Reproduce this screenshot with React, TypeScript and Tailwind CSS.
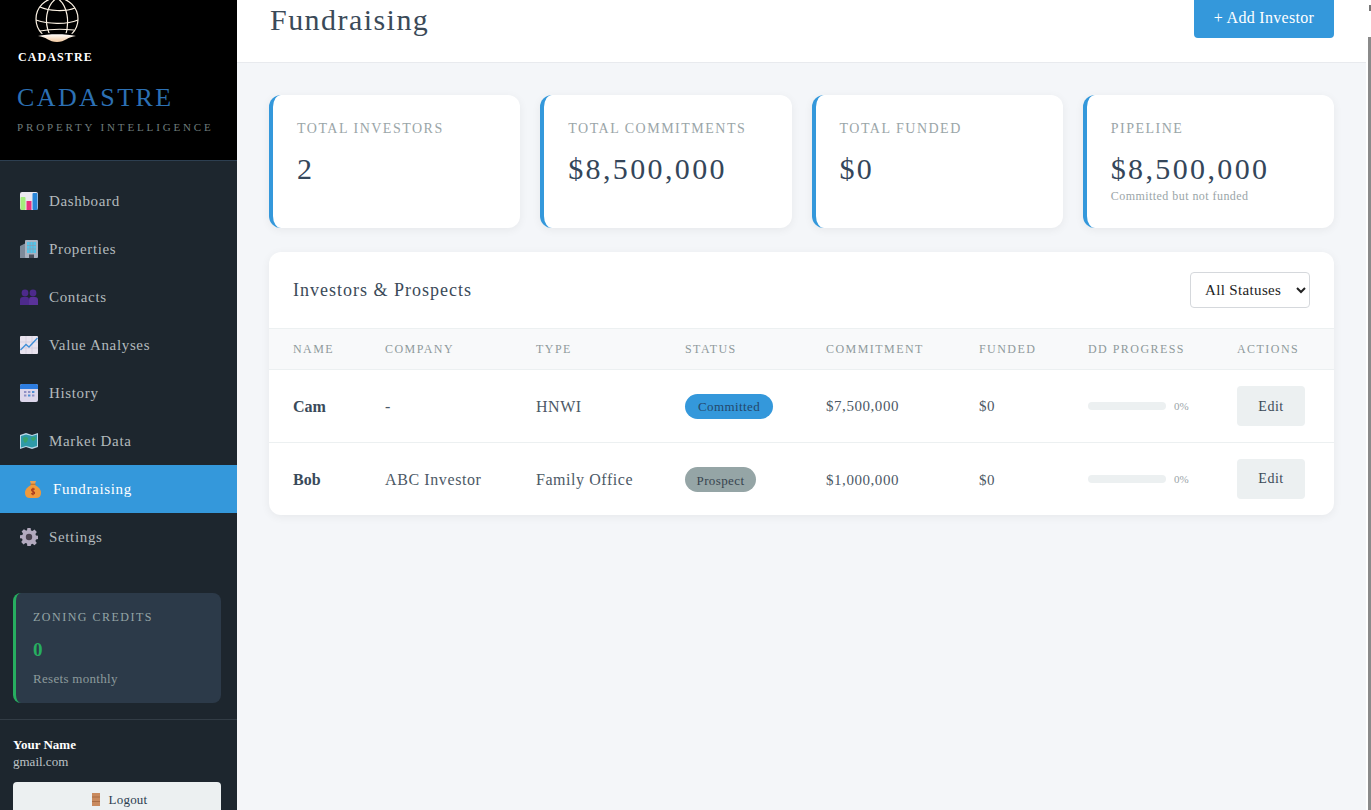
import React from "react";

const IconChart = () => (
  <svg width="18" height="18" viewBox="0 0 18 18">
    <rect x="0" y="0" width="18" height="18" rx="2" fill="#ece8f0" />
    <rect x="0.5" y="5" width="5" height="13" rx="1" fill="#a4ec7c" />
    <rect x="6.5" y="9" width="5" height="9" fill="#e8337e" />
    <rect x="12.5" y="1" width="5" height="17" rx="1" fill="#2a86d8" />
  </svg>
);
const IconBuilding = () => (
  <svg width="18" height="18" viewBox="0 0 18 18">
    <path d="M0 6 L6 3 V18 H0 Z" fill="#7d8a9a" />
    <rect x="5" y="0" width="13" height="18" rx="1" fill="#a9b2c0" />
    <rect x="7" y="2" width="9" height="11" fill="#55c4e8" />
    <path d="M7 5.5H16M7 9H16M10 2V13M13 2V13" stroke="#8c9bb0" strokeWidth="0.7" />
    <rect x="9" y="14.5" width="5" height="3.5" fill="#4a4f5c" />
  </svg>
);
const IconPeople = () => (
  <svg width="18" height="16" viewBox="0 0 18 16">
    <circle cx="5" cy="4" r="3.4" fill="#4d2a8c" />
    <circle cx="13" cy="4" r="3.4" fill="#4d2a8c" />
    <path d="M0 16 V11 Q0 8 3 8 H7 Q9 8 9 11 V16 Z" fill="#4d2a8c" />
    <path d="M9 16 V11 Q9 8 11 8 H15 Q18 8 18 11 V16 Z" fill="#5a3299" />
  </svg>
);
const IconTrend = () => (
  <svg width="18" height="18" viewBox="0 0 18 18">
    <rect width="18" height="18" rx="1" fill="#e9e3ee" />
    <path d="M0 6H18M0 12H18M6 0V18M12 0V18" stroke="#cfc6d8" strokeWidth="0.6" />
    <path d="M0.5 14 L6 8.5 L9 11 L17.5 2" fill="none" stroke="#3f8fd8" strokeWidth="1.3" />
  </svg>
);
const IconCalendar = () => (
  <svg width="18" height="18" viewBox="0 0 18 18">
    <rect width="18" height="18" rx="2" fill="#dcd6ea" />
    <path d="M0 5 V2 Q0 0 2 0 H16 Q18 0 18 2 V5 Z" fill="#2e7de0" />
    <g fill="#8f8fc4">
      <rect x="4" y="7" width="2.4" height="2" />
      <rect x="8" y="7" width="2.4" height="2" />
      <rect x="12" y="7" width="2.4" height="2" fill="#4d8fd4" />
      <rect x="4" y="10.5" width="2.4" height="2" />
      <rect x="8" y="10.5" width="2.4" height="2" fill="#4d8fd4" />
      <rect x="12" y="10.5" width="2.4" height="2" />
    </g>
  </svg>
);
const IconMap = () => (
  <svg width="18" height="16" viewBox="0 0 18 16">
    <path d="M0 2 L6 0 L12 2 L18 0 V14 L12 16 L6 14 L0 16 Z" fill="#bcd8e8" />
    <path d="M1 3 L6 1.5 L12 3 L17 1.5 V13 L12 14.5 L6 13 L1 14.5 Z" fill="#2f9aa8" />
    <path d="M3 5 Q6 3 8 5 Q8 9 5 10 Q3 8 3 5 Z M11 5 Q14 3 16 5 Q15 8 13 8 Q11 7 11 5 Z" fill="#3aa36a" />
  </svg>
);
const IconBag = () => (
  <svg width="16" height="18" viewBox="0 0 16 18">
    <path d="M5 1 H11 L10 4 H6 Z" fill="#e9a257" />
    <rect x="5.5" y="3.6" width="5" height="1.4" fill="#c9772c" />
    <path d="M6 5 H10 Q16 8 16 13 Q16 18 11 18 H5 Q0 18 0 13 Q0 8 6 5 Z" fill="#f09a3c" />
    <path d="M9.8 9.3 Q8 8.4 6.8 9.3 Q6 10.6 8 11.4 Q10 12.2 9.4 13.6 Q8 14.6 6.2 13.6 M8 7.8 V15.2" fill="none" stroke="#a8391f" strokeWidth="1.1" />
  </svg>
);
const IconGear = () => (
  <svg width="18" height="18" viewBox="0 0 18 18">
    <path
      fill="#b3aabf"
      d="M7.4 0h3.2l.4 2.4 1.5.6 2-1.4 2.3 2.3-1.4 2 .6 1.5 2.4.4v3.2l-2.4.4-.6 1.5 1.4 2-2.3 2.3-2-1.4-1.5.6-.4 2.4H7.4L7 15.6l-1.5-.6-2 1.4-2.3-2.3 1.4-2-.6-1.5-2.4-.4V7.4L2.4 7l.6-1.5-1.4-2 2.3-2.3 2 1.4L7 2.4z"
    />
    <circle cx="9" cy="9" r="3.2" fill="#4a4350" />
  </svg>
);
const IconDoor = () => (
  <svg width="8" height="13" viewBox="0 0 8 13" className="shrink-0">
    <rect width="8" height="13" fill="#c98a5e" />
    <path d="M0 4H8M0 8.5H8" stroke="#a96c44" strokeWidth="1" />
  </svg>
);

const Logo = () => (
  <svg width="50" height="44" viewBox="0 0 50 44" className="block">
    <defs>
      <linearGradient id="base" x1="0" y1="0" x2="0" y2="1">
        <stop offset="0" stopColor="#ffffff" />
        <stop offset="1" stopColor="#f2c9a0" />
      </linearGradient>
    </defs>
    <g fill="none" stroke="#fdf3e4" strokeWidth="1.2">
      <circle cx="25" cy="20" r="21" />
      <path d="M25 -1 C14 6 11 24 19 38" />
      <path d="M25 -1 C36 6 38 24 33 38" />
      <path d="M8 8 C17 12 33 13 43 9" />
      <path d="M4 21 C16 25 34 26 46 21" />
      <path d="M8 32 C18 30 32 30 42 31" />
    </g>
    <path d="M4 36 C15 33 35 33 46 36 C38 38 36 44 25 44 C14 44 12 38 4 36 Z" fill="#000" />
    <path d="M6 37 C16 34.5 34 34.5 44 37 C36 37.5 33 43 25 43 C17 43 14 37.5 6 37 Z" fill="url(#base)" />
  </svg>
);

const nav: { label: string; icon: React.ReactNode }[] = [
  { label: "Dashboard", icon: <IconChart /> },
  { label: "Properties", icon: <IconBuilding /> },
  { label: "Contacts", icon: <IconPeople /> },
  { label: "Value Analyses", icon: <IconTrend /> },
  { label: "History", icon: <IconCalendar /> },
  { label: "Market Data", icon: <IconMap /> },
  { label: "Fundraising", icon: <IconBag /> },
  { label: "Settings", icon: <IconGear /> },
];

const stats = [
  { label: "Total Investors", value: "2" },
  { label: "Total Commitments", value: "$8,500,000" },
  { label: "Total Funded", value: "$0" },
  { label: "Pipeline", value: "$8,500,000", sub: "Committed but not funded" },
];

const heads = ["Name", "Company", "Type", "Status", "Commitment", "Funded", "DD Progress", "Actions"];

const rows = [
  { name: "Cam", company: "-", type: "HNWI", status: "Committed", commitment: "$7,500,000", funded: "$0" },
  { name: "Bob", company: "ABC Investor", type: "Family Office", status: "Prospect", commitment: "$1,000,000", funded: "$0" },
];

export default function App() {
  return (
    <div className="flex h-[810px] w-[1371px] overflow-hidden bg-white font-['Liberation_Serif',serif] [font-variant-numeric:oldstyle-nums]">
      <aside className="flex w-[237px] shrink-0 flex-col bg-[#1d262e]">
        <div className="h-[161px] shrink-0 border-b border-[#2c3e50] bg-black pl-[17px]">
          <div className="-mt-[1px] ml-[15px] h-[45px]">
            <Logo />
          </div>
          <div className="ml-[1px] mt-[5px] text-[12px] font-bold leading-[16px] tracking-[1.1px] text-white">CADASTRE</div>
          <div className="mt-[17px] text-[26px] leading-[32px] tracking-[2.4px] text-[#2c70b4]">CADASTRE</div>
          <div className="mt-[5px] text-[11px] leading-[16px] tracking-[2.85px] text-[#6f7c7c]">PROPERTY INTELLIGENCE</div>
        </div>
        <nav className="mt-[16px] flex shrink-0 flex-col">
          {nav.map((n) => {
            const active = n.label === "Fundraising";
            return (
              <div
                key={n.label}
                className={
                  active
                    ? "flex h-[48px] items-center bg-[#3498db] pl-[25px] text-[15px] tracking-[0.65px] text-white"
                    : "flex h-[48px] items-center pl-[20px] text-[15px] tracking-[0.65px] text-[#b3babd]"
                }
              >
                <span className={active ? "flex w-[28px] shrink-0 items-center" : "flex w-[29px] shrink-0 items-center"}>{n.icon}</span>
                <span>{n.label}</span>
              </div>
            );
          })}
        </nav>
        <div className="ml-[13px] mr-[16px] mt-[32px] h-[110px] shrink-0 rounded-[8px] border-l-[3px] border-[#27ae60] bg-[#2c3a49] pl-[17px] pt-[16px]">
          <div className="text-[12px] leading-[16px] tracking-[1.5px] text-[#95a5a6]">ZONING CREDITS</div>
          <div className="mt-[12px] text-[19px] font-bold leading-[26px] text-[#27ae60]">0</div>
          <div className="mt-[7px] text-[13px] leading-[18px] tracking-[0.3px] text-[#8d9a9c]">Resets monthly</div>
        </div>
        <div className="mt-[16px] flex-1 border-t border-[#323c45] pl-[13px] pr-[16px] pt-[16px]">
          <div className="text-[13px] font-bold leading-[17px] text-white">Your Name</div>
          <div className="text-[13px] leading-[17px] text-[#bdc3c7]">gmail.com</div>
          <div className="mt-[12px] flex h-[40px] items-start justify-center gap-[9px] rounded-[4px] bg-[#ecf0f1] pl-[5px] pt-[11px] text-[13px] leading-[14px] tracking-[0.2px] text-[#2c3e50]">
            <IconDoor />
            <span>Logout</span>
          </div>
        </div>
      </aside>

      <main className="flex min-w-0 flex-1 flex-col bg-[#f4f6f9]">
        <header className="flex h-[63px] shrink-0 items-start justify-between border-b border-[#e8eaee] bg-white pl-[33px] pr-[32px]">
          <h1 className="mt-[2px] text-[30px] font-normal leading-[36px] tracking-[1.45px] text-[#3b4a58]">Fundraising</h1>
          <div className="-mt-[10px] flex h-[48px] w-[140px] items-center justify-center rounded-[4px] bg-[#3498db] pt-[8px] text-[16px] tracking-[0.3px] text-white">
            + Add Investor
          </div>
        </header>

        <div className="px-[32px] pt-[32px]">
          <div className="grid grid-cols-4 gap-[20px]">
            {stats.map((s) => (
              <div
                key={s.label}
                className="h-[133px] rounded-[12px] border-l-[4px] border-[#3498db] bg-white pl-[24px] pt-[25px] shadow-[0_2px_10px_rgba(0,0,0,0.06)]"
              >
                <div className="text-[14px] uppercase leading-[18px] tracking-[1.5px] text-[#9aa5a8]">{s.label}</div>
                <div className="mt-[11px] text-[30px] leading-[40px] tracking-[2.36px] text-[#34465a]">{s.value}</div>
                {s.sub && <div className="text-[12px] leading-[14px] tracking-[0.45px] text-[#9aa5a8]">{s.sub}</div>}
              </div>
            ))}
          </div>

          <section className="mt-[24px] overflow-hidden rounded-[12px] bg-white shadow-[0_2px_10px_rgba(0,0,0,0.06)]">
            <div className="flex h-[76px] items-center justify-between pl-[24px] pr-[24px]">
              <h2 className="text-[18px] font-normal tracking-[1px] text-[#3b4a58]">Investors &amp; Prospects</h2>
              <select className="h-[36px] w-[120px] rounded-[4px] border border-[#d5d8dc] bg-white pl-[10px] text-[15px] tracking-[0.35px] text-[#222]">
                <option>All Statuses</option>
              </select>
            </div>
            <table className="w-full table-fixed border-collapse">
              <colgroup>
                <col className="w-[92px]" />
                <col className="w-[151px]" />
                <col className="w-[149px]" />
                <col className="w-[141px]" />
                <col className="w-[153px]" />
                <col className="w-[109px]" />
                <col className="w-[149px]" />
                <col className="w-[121px]" />
              </colgroup>
              <thead>
                <tr className="h-[41px] border-y border-[#ecf0f1] bg-[#f8f9fa]">
                  {heads.map((h) => (
                    <th key={h} className="pl-[24px] text-left text-[12px] font-normal uppercase tracking-[1.45px] text-[#8f9a9c]">
                      {h}
                    </th>
                  ))}
                </tr>
              </thead>
              <tbody>
                {rows.map((r, i) => {
                  const cell = i === 1 ? "pl-[24px] pt-[3px]" : "pl-[24px] pt-[1px]";
                  return (
                    <tr key={r.name} className={i === 0 ? "h-[73px] border-b border-[#ecf0f1]" : "h-[72px]"}>
                      <td className={`${cell} text-[16px] font-bold text-[#3a4a5a]`}>{r.name}</td>
                      <td className={`${cell} text-[16px] tracking-[0.6px] text-[#4c5966]`}>{r.company}</td>
                      <td className={`${cell} text-[16px] tracking-[0.55px] text-[#4c5966]`}>{r.type}</td>
                      <td className={i === 1 ? "pl-[24px] pt-[2px]" : "pl-[24px]"}>
                        <span
                          className={
                            r.status === "Committed"
                              ? "inline-flex h-[25px] w-[88px] items-center justify-center rounded-full bg-[#3498db] pt-[1px] text-[13px] tracking-[0.4px] text-[#24486b]"
                              : "inline-flex h-[25px] w-[71px] items-center justify-center rounded-full bg-[#95a5a6] pt-[1px] text-[13px] tracking-[0.4px] text-[#37444f]"
                          }
                        >
                          {r.status}
                        </span>
                      </td>
                      <td className={`${cell} text-[15px] tracking-[0.55px] text-[#4c5966]`}>{r.commitment}</td>
                      <td className={`${cell} text-[15px] tracking-[0.55px] text-[#4c5966]`}>{r.funded}</td>
                      <td className="pl-[24px]">
                        <div className="flex items-center gap-[8px]">
                          <div className="h-[8px] w-[78px] rounded-full bg-[#ecf0f1]" />
                          <span className="text-[11px] text-[#9aa5a8]">0%</span>
                        </div>
                      </td>
                      <td className="pl-[24px]">
                        <div className="flex h-[40px] w-[68px] items-center justify-center rounded-[4px] bg-[#ecf0f1] text-[14px] tracking-[0.5px] text-[#3b4a58]">
                          Edit
                        </div>
                      </td>
                    </tr>
                  );
                })}
              </tbody>
            </table>
          </section>
        </div>
      </main>

      <div className="flex w-[5px] shrink-0 flex-col items-end bg-white">
        <div className="mt-[5px] h-[6px] w-[2px] bg-[#777]" />
        <div className="mt-[26px] w-[3px] flex-1 bg-[#8a8a8a]" />
      </div>
    </div>
  );
}
